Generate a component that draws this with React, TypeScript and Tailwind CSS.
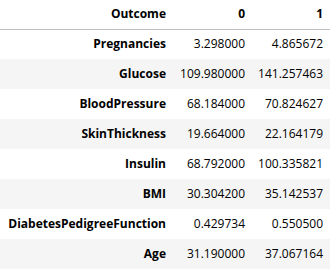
const rows: [string, string, string][] = [
  ["Pregnancies", "3.298000", "4.865672"],
  ["Glucose", "109.980000", "141.257463"],
  ["BloodPressure", "68.184000", "70.824627"],
  ["SkinThickness", "19.664000", "22.164179"],
  ["Insulin", "68.792000", "100.335821"],
  ["BMI", "30.304200", "35.142537"],
  ["DiabetesPedigreeFunction", "0.429734", "0.550500"],
  ["Age", "31.190000", "37.067164"],
];

export default function App() {
  return (
    <div className="h-[275px] w-[336px] bg-white font-['Open_Sans',sans-serif] text-[12px] text-black">
      <table className="w-[330px] table-fixed border-collapse">
        <colgroup>
          <col className="w-[173px]" />
          <col className="w-[79px]" />
          <col className="w-[78px]" />
        </colgroup>
        <thead>
          <tr className="h-[29px] border-b border-[#bdbdbd]">
            <th className="pr-[7px] text-right font-bold">Outcome</th>
            <th className="pr-[7px] text-right font-bold">0</th>
            <th className="pr-[7px] text-right font-bold">1</th>
          </tr>
        </thead>
        <tbody>
          {rows.map(([label, a, b], i) => (
            <tr key={label} className={i % 2 === 1 ? "h-[30px] bg-[#f5f5f5]" : "h-[30px] bg-white"}>
              <th className="pr-[7px] text-right font-bold">{label}</th>
              <td className="pr-[7px] text-right">{a}</td>
              <td className="pr-[7px] text-right">{b}</td>
            </tr>
          ))}
        </tbody>
      </table>
    </div>
  );
}
